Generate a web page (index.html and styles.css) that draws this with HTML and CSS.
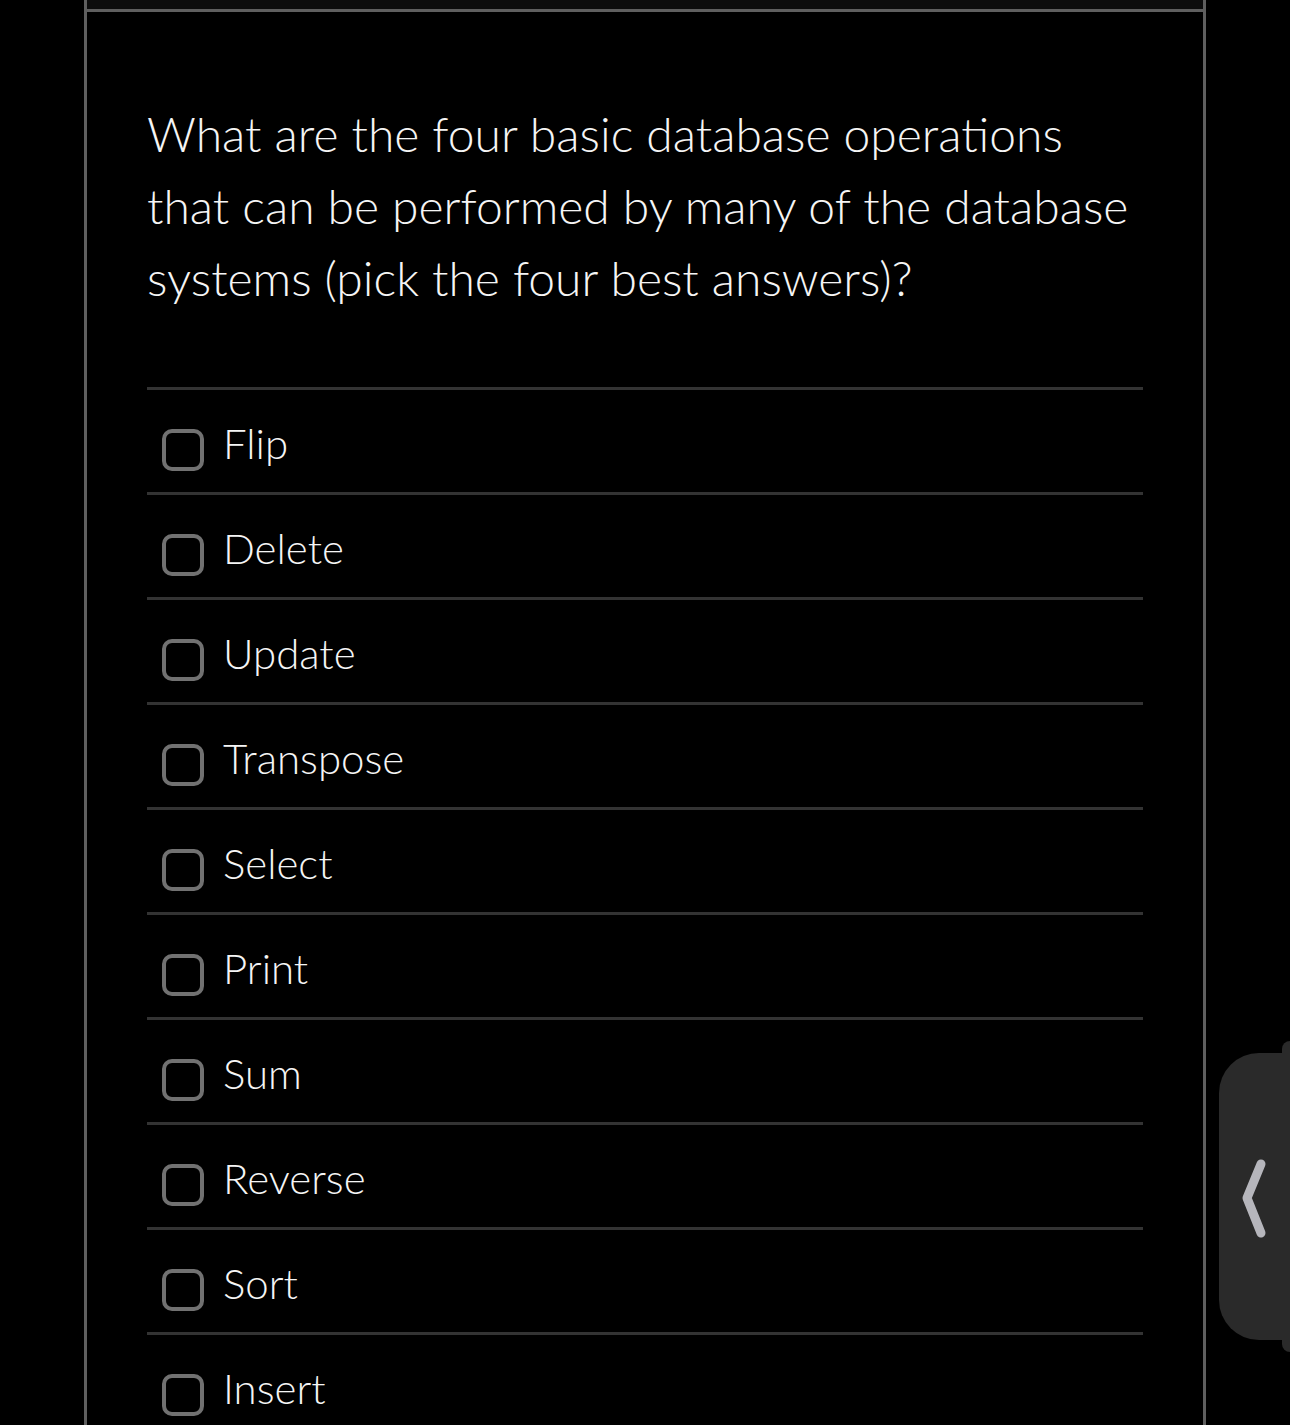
FILE: index.html
```html
<!DOCTYPE html>
<html lang="en">

<head>
    <meta charset="UTF-8">
    <meta name="viewport" content="width=device-width, initial-scale=1.0">
    <title>Quiz Question</title>
    <link rel="stylesheet" href="styles.css">
</head>

<body>

    <div class="quiz-panel">
        <div class="panel-top"></div>

        <div class="question-body">
            <p class="question-text">What are the four basic database operations that can be performed by many of the database systems (pick the four best answers)?</p>

            <ul class="answer-list">
                <li class="answer-row"><span class="check-box"></span><span class="answer-label">Flip</span></li>
                <li class="answer-row"><span class="check-box"></span><span class="answer-label">Delete</span></li>
                <li class="answer-row"><span class="check-box"></span><span class="answer-label">Update</span></li>
                <li class="answer-row"><span class="check-box"></span><span class="answer-label">Transpose</span></li>
                <li class="answer-row"><span class="check-box"></span><span class="answer-label">Select</span></li>
                <li class="answer-row"><span class="check-box"></span><span class="answer-label">Print</span></li>
                <li class="answer-row"><span class="check-box"></span><span class="answer-label">Sum</span></li>
                <li class="answer-row"><span class="check-box"></span><span class="answer-label">Reverse</span></li>
                <li class="answer-row"><span class="check-box"></span><span class="answer-label">Sort</span></li>
                <li class="answer-row"><span class="check-box"></span><span class="answer-label">Insert</span></li>
            </ul>
        </div>
    </div>

    <!-- side drawer handle -->
    <div class="side-handle">
        <svg width="30" height="90" viewBox="0 0 30 90">
            <path d="M20 12 L6 46 L20 81" fill="none" stroke="#b6b6bc" stroke-width="9" stroke-linecap="round" stroke-linejoin="round" />
        </svg>
    </div>

</body>

</html>
```

FILE: styles.css
```css
/* --- Page --- */
html,
body {
    height: 100%;
    overflow: hidden;
}

body {
    margin: 0;
    background-color: #000;
    font-family: "Lato", "Liberation Sans", sans-serif;
    font-weight: 300;
    color: #f5f5f5;
}

/* --- Panel with grey frame --- */
.quiz-panel {
    width: 1116px;
    margin-left: 84px;
    min-height: 100%;
    border-left: 3px solid #5f5f5f;
    border-right: 3px solid #5f5f5f;
}

.panel-top {
    height: 9px;
    background-color: #0d0d0d;
    border-bottom: 3px solid #5f5f5f;
}

.question-body {
    padding: 86px 60px 0;
}

.question-text {
    margin: 0;
    font-size: 48px;
    line-height: 72px;
}

/* --- Answers --- */
.answer-list {
    list-style: none;
    margin: 73px 0 0;
    padding: 0;
}

.answer-row {
    display: flex;
    align-items: flex-start;
    gap: 19px;
    height: 105px;
    box-sizing: border-box;
    padding: 39px 0 0 15px;
    border-top: 3px solid #333;
}

.check-box {
    width: 42px;
    height: 42px;
    box-sizing: border-box;
    border: 4px solid #717171;
    border-radius: 10px;
    flex-shrink: 0;
}

.answer-label {
    font-size: 42px;
    line-height: 28px;
}

/* --- Drawer handle on the right edge --- */
.side-handle {
    position: absolute;
    left: 1219px;
    top: 1053px;
    width: 71px;
    height: 287px;
    background-color: #2a2a2a;
    border-radius: 40px 0 0 40px;
    display: flex;
    align-items: center;
    padding-left: 22px;
    box-sizing: border-box;
}

.side-handle::before {
    content: '';
    position: absolute;
    right: 0;
    top: -12px;
    bottom: -12px;
    width: 8px;
    background-color: #2a2a2a;
    border-radius: 8px 0 0 8px;
}
```
